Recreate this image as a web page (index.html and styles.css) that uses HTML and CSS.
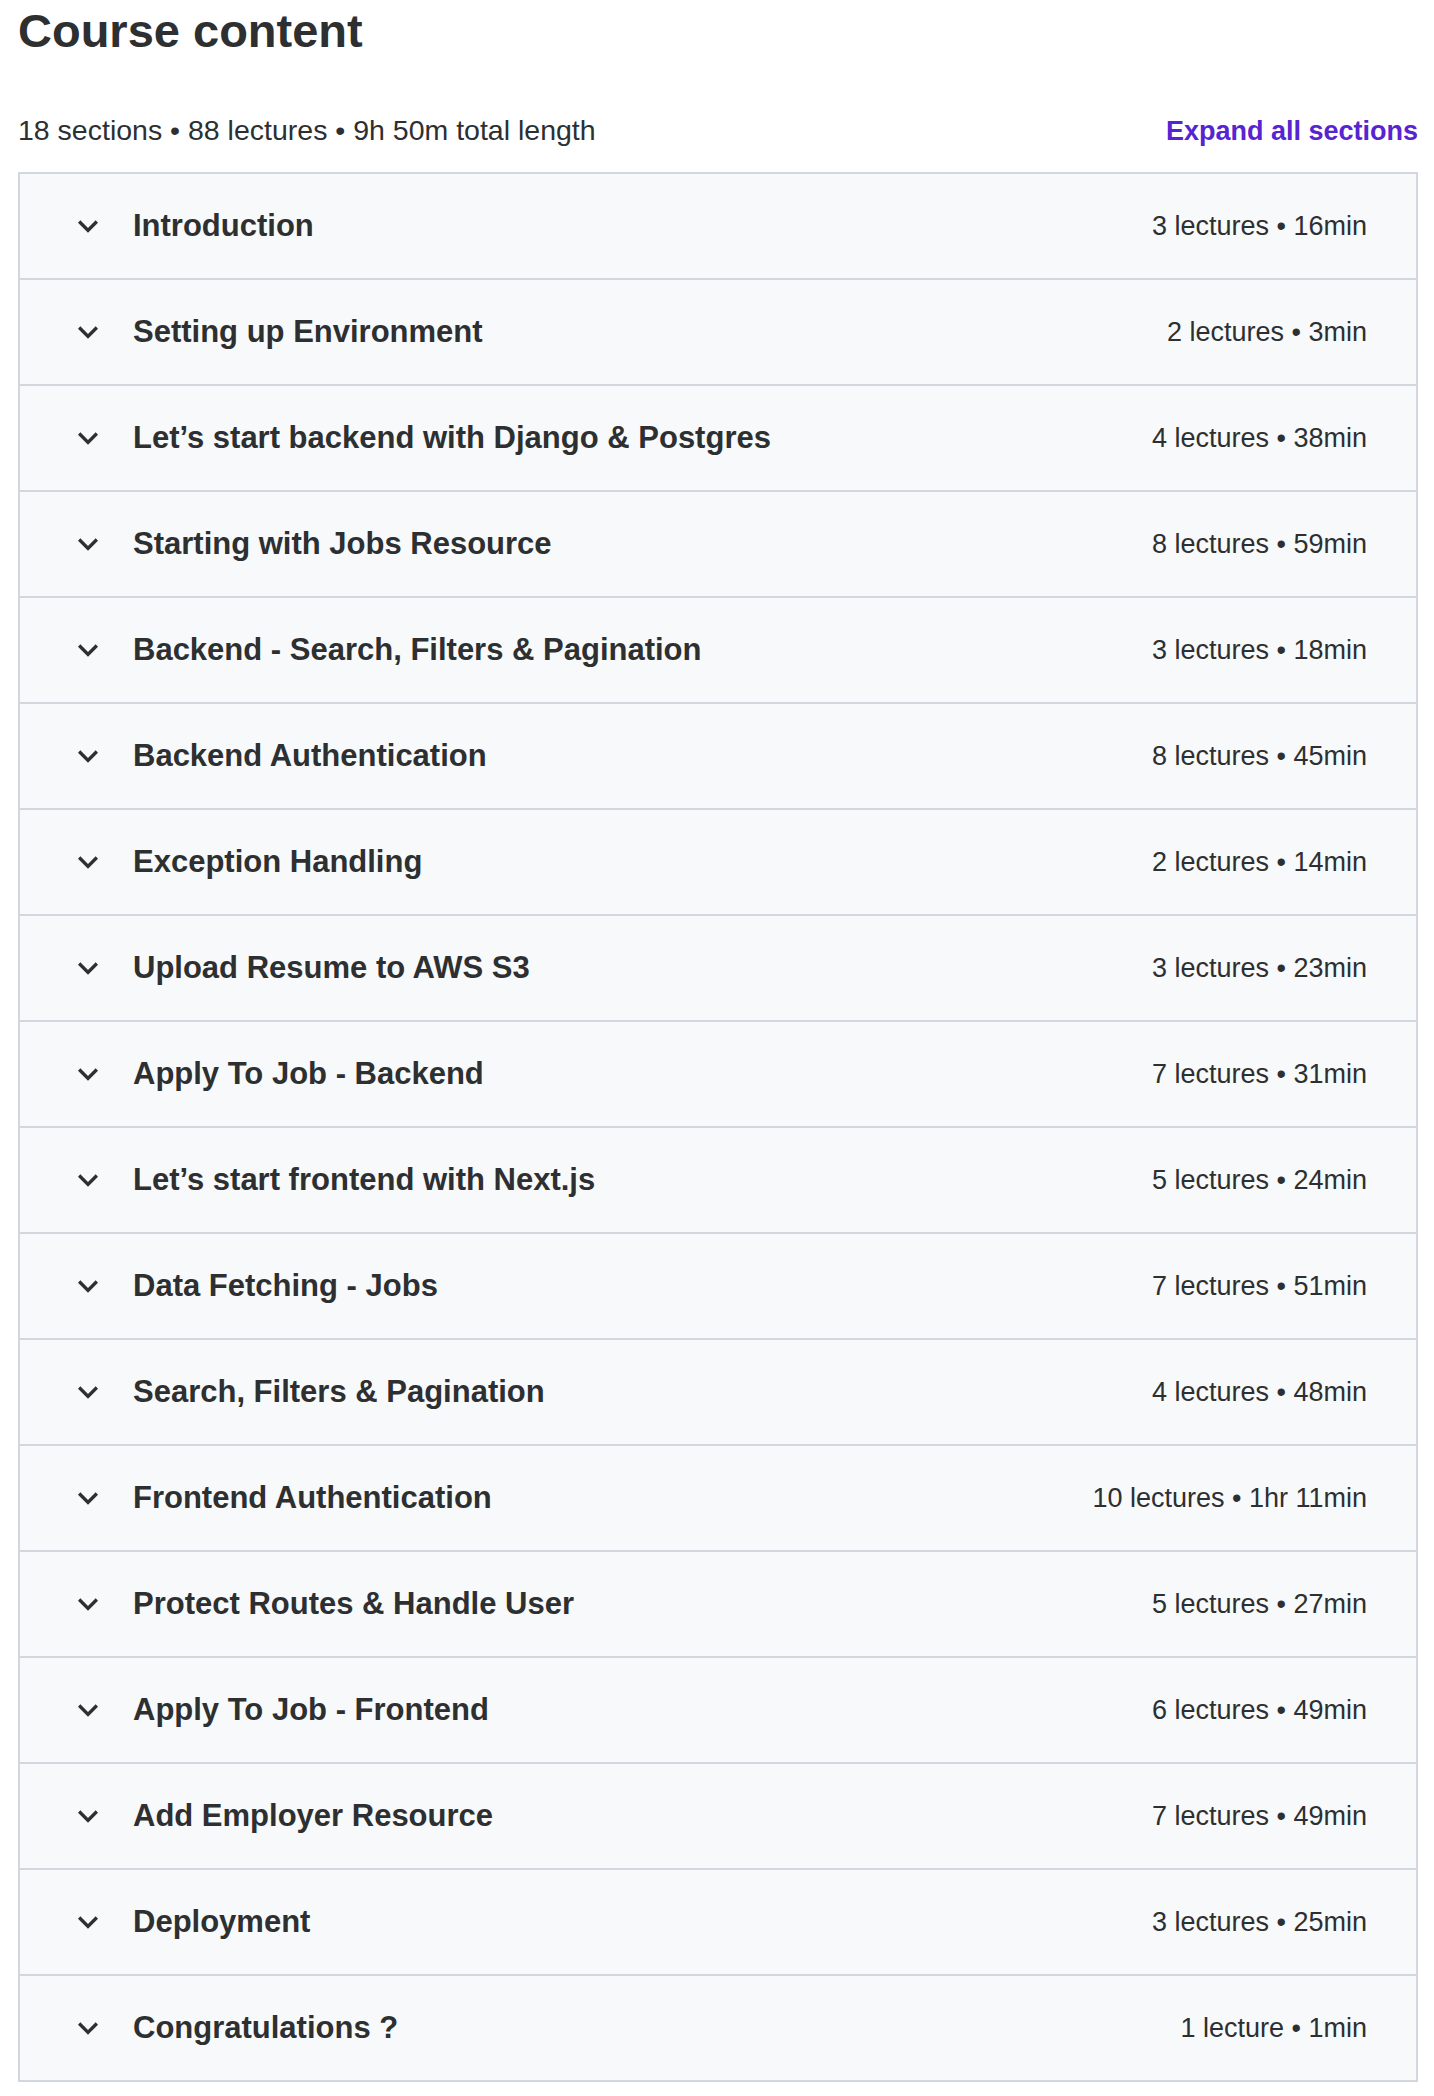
FILE: index.html
```html
<!DOCTYPE html>
<html lang="en">
<head>
  <meta charset="UTF-8">
  <meta name="viewport" content="width=device-width, initial-scale=1.0">
  <title>Course content</title>
  <link rel="stylesheet" href="styles.css">
</head>
<body>
  <div class="curriculum">
    <h2 class="heading">Course content</h2>

    <div class="summary">
      <span class="summary-text">18 sections • 88 lectures • 9h 50m total length</span>
      <button class="expand">Expand all sections</button>
    </div>

    <div class="sections" id="sections"></div>
  </div>

  <script>
    // Sections of the course: title and lecture info
    const sections = [
      ['Introduction', '3 lectures • 16min'],
      ['Setting up Environment', '2 lectures • 3min'],
      ['Let’s start backend with Django & Postgres', '4 lectures • 38min'],
      ['Starting with Jobs Resource', '8 lectures • 59min'],
      ['Backend - Search, Filters & Pagination', '3 lectures • 18min'],
      ['Backend Authentication', '8 lectures • 45min'],
      ['Exception Handling', '2 lectures • 14min'],
      ['Upload Resume to AWS S3', '3 lectures • 23min'],
      ['Apply To Job - Backend', '7 lectures • 31min'],
      ['Let’s start frontend with Next.js', '5 lectures • 24min'],
      ['Data Fetching - Jobs', '7 lectures • 51min'],
      ['Search, Filters & Pagination', '4 lectures • 48min'],
      ['Frontend Authentication', '10 lectures • 1hr 11min'],
      ['Protect Routes & Handle User', '5 lectures • 27min'],
      ['Apply To Job - Frontend', '6 lectures • 49min'],
      ['Add Employer Resource', '7 lectures • 49min'],
      ['Deployment', '3 lectures • 25min'],
      ['Congratulations ?', '1 lecture • 1min']
    ];

    const list = document.getElementById('sections');
    const chevron = '<svg class="chevron" viewBox="0 0 24 24" width="40" height="40">' +
      '<path d="M16.59 8.59L12 13.17 7.41 8.59 6 10l6 6 6-6z" fill="currentColor"/></svg>';

    sections.forEach(([title, meta]) => {
      const row = document.createElement('div');
      row.className = 'section';
      row.innerHTML =
        '<div class="section-header">' + chevron +
        '<span class="section-title"></span>' +
        '<span class="section-meta"></span></div>';
      row.querySelector('.section-title').textContent = title;
      row.querySelector('.section-meta').textContent = meta;
      list.appendChild(row);
    });
  </script>
</body>
</html>
```

FILE: styles.css
```css
body {
  margin: 0;
  background-color: white;
  color: #2d2f31;
  font-family: "Liberation Sans", Arial, sans-serif;
}
.curriculum {
  padding: 0 16px 0 18px;
}
.heading {
  margin: 3px 0 0;
  font-size: 47px;
  line-height: 56px;
  font-weight: bold;
}
.summary {
  display: flex;
  justify-content: space-between;
  align-items: baseline;
  margin-top: 51px;
  height: 40px;
}
.summary-text {
  font-size: 28.5px;
  line-height: 40px;
}
.expand {
  padding: 0;
  border: none;
  background: none;
  color: #5624d0;
  font-family: inherit;
  font-size: 27px;
  font-weight: bold;
  line-height: 40px;
  cursor: pointer;
}
.sections {
  margin-top: 22px;
  border: 2px solid #d1d7dc;
}
.section + .section {
  border-top: 2px solid #d1d7dc;
}
.section-header {
  display: flex;
  align-items: center;
  height: 104px;
  padding: 0 49px 0 48px;
  background-color: #f7f9fa;
  cursor: pointer;
}
.chevron {
  flex-shrink: 0;
  color: #2d2f31;
}
.section-title {
  flex: 1;
  margin-left: 25px;
  font-size: 31px;
  font-weight: bold;
}
.section-meta {
  font-size: 27px;
  white-space: nowrap;
}
```
